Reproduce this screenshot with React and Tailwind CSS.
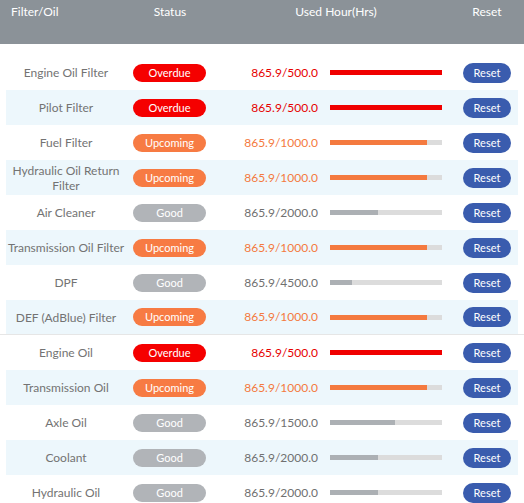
import React from "react";

const rows = [
  { name: "Engine Oil Filter", s: "o", used: 865.9, total: 500 },
  { name: "Pilot Filter", s: "o", used: 865.9, total: 500 },
  { name: "Fuel Filter", s: "u", used: 865.9, total: 1000 },
  { name: "Hydraulic Oil Return Filter", s: "u", used: 865.9, total: 1000 },
  { name: "Air Cleaner", s: "g", used: 865.9, total: 2000 },
  { name: "Transmission Oil Filter", s: "u", used: 865.9, total: 1000 },
  { name: "DPF", s: "g", used: 865.9, total: 4500 },
  { name: "DEF (AdBlue) Filter", s: "u", used: 865.9, total: 1000, sep: true },
  { name: "Engine Oil", s: "o", used: 865.9, total: 500 },
  { name: "Transmission Oil", s: "u", used: 865.9, total: 1000 },
  { name: "Axle Oil", s: "g", used: 865.9, total: 1500 },
  { name: "Coolant", s: "g", used: 865.9, total: 2000 },
  { name: "Hydraulic Oil", s: "g", used: 865.9, total: 2000 },
];

const badge = {
  o: { label: "Overdue", cls: "bg-[#f50000]" },
  u: { label: "Upcoming", cls: "bg-[#f77b43]" },
  g: { label: "Good", cls: "bg-[#b1b4b8]" },
};
const numCls = { o: "text-[#e60000]", u: "text-[#f47a40]", g: "text-[#707070]" };
const barCls = { o: "bg-[#f00000]", u: "bg-[#f47a3f]", g: "bg-[#acb0b4]" };

export default function App() {
  return (
    <div
      className="w-[524px] h-[503px] overflow-hidden bg-white"
      style={{ fontFamily: "Lato, 'Open Sans', sans-serif" }}
    >
      <div className="h-[44px] bg-[#8b9298] text-white text-[12px] leading-[16px] flex items-start pt-[4px]">
        <div className="w-[120px] pl-[11px]">Filter/Oil</div>
        <div className="w-[100px] text-center">Status</div>
        <div className="w-[232px] text-center">Used Hour(Hrs)</div>
        <div className="w-[72px] text-center pr-[2px]">Reset</div>
      </div>
      <div className="mt-[11px]">
        {rows.map((r, i) => {
          const pct = Math.min(100, (r.used / r.total) * 100);
          return (
            <div key={i} className={r.sep ? "border-b border-[#e6e6e6]" : ""}>
              <div
                className={`ml-[6px] w-[512px] flex items-center ${
                  r.sep ? "h-[34px]" : "h-[35px]"
                } ${i % 2 === 1 ? "bg-[#edf7fc]" : ""}`}
              >
                <div className="w-[120px] text-center text-[12px] leading-[15px] text-[#737373]">
                  {r.name}
                </div>
                <div className="w-[87px] flex justify-center">
                  <div
                    className={`w-[73px] h-[18px] rounded-[9px] text-white text-[11px] leading-[18px] text-center ${badge[r.s].cls}`}
                  >
                    {badge[r.s].label}
                  </div>
                </div>
                <div className={`w-[105px] text-right text-[12px] ${numCls[r.s]}`}>
                  {r.used.toFixed(1)}/{r.total.toFixed(1)}
                </div>
                <div className="ml-[12px] w-[112px] h-[5px] bg-[#dcdcdc]">
                  <div className={`h-full ${barCls[r.s]}`} style={{ width: `${pct}%` }} />
                </div>
                <div className="ml-[21px] flex items-center">
                  <div className="w-[48px] h-[20px] rounded-[10px] bg-[#3a5cae] text-white text-[11px] leading-[20px] text-center">
                    Reset
                  </div>
                </div>
              </div>
            </div>
          );
        })}
      </div>
    </div>
  );
}
